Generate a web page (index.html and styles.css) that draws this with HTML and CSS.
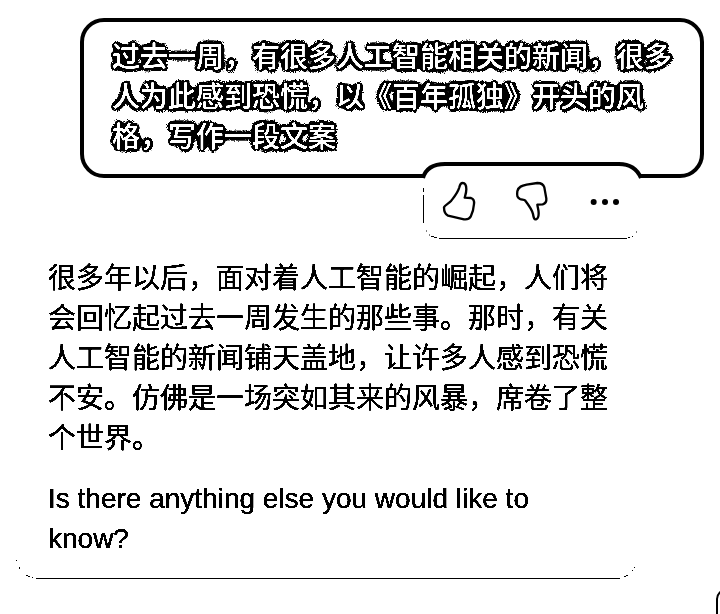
FILE: index.html
```html
<!DOCTYPE html>
<html lang="zh-CN">
<head>
<meta charset="utf-8">
<meta name="viewport" content="width=device-width, initial-scale=1">
<title>Chat</title>
<link rel="stylesheet" href="styles.css">
</head>
<body>
<svg class="defs" aria-hidden="true">
  <filter id="halo" x="-2%" y="-8%" width="104%" height="116%" color-interpolation-filters="sRGB">
    <feGaussianBlur in="SourceAlpha" stdDeviation="2.400" result="soft"/>
    <feTurbulence type="fractalNoise" baseFrequency="0.9" numOctaves="1" seed="4" result="noise"/>
    <feDisplacementMap in="soft" in2="noise" scale="4" xChannelSelector="R" yChannelSelector="G" result="rough"/>
    <feComponentTransfer in="rough" result="ink">
      <feFuncR type="linear" slope="0"/>
      <feFuncG type="linear" slope="0"/>
      <feFuncB type="linear" slope="0"/>
      <feFuncA type="linear" slope="60" intercept="-4"/>
    </feComponentTransfer>
    <feComponentTransfer in="SourceGraphic" result="glyphs">
      <feFuncA type="linear" slope="5" intercept="-1.800"/>
    </feComponentTransfer>
    <feMerge>
      <feMergeNode in="ink"/>
      <feMergeNode in="glyphs"/>
    </feMerge>
  </filter>
  <filter id="crisp" x="0" y="0" width="100%" height="100%" color-interpolation-filters="sRGB">
    <feComponentTransfer>
      <feFuncA type="linear" slope="8" intercept="-1.200"/>
    </feComponentTransfer>
  </filter>
</svg>
<main class="chat">
  <section class="question">
    <p class="question-text">过去一周，有很多人工智能相关的新闻，很多人为此感到恐慌，以《百年孤独》开头的风格，写作一段文案</p>
  </section>
  <article class="answer">
    <div class="toolbar">
      <svg class="toolbar-frame" viewBox="0 0 222 78" aria-hidden="true">
        <path d="M2 16Q6 2 24 2H198Q216 2 220 16V60Q216 76 198 76H24Q6 76 2 60Z" fill="#fff"/>
        <path d="M2 16Q6 2 24 2H198Q214 2 220 16" fill="none" stroke="#000" stroke-width="4"/>
        <path d="M2.500 26V30M2.500 33V61M5 69h1M8 73h1M10 74.500h3M13 75.500h3M18 76.500H206M207 75.500h2M211 74.500h1M215 70h1" fill="none" stroke="#000"/>
      </svg>
      <button class="tool" type="button" aria-label="Like">
        <svg viewBox="96 90 108 126"><path d="M105 172C108 165 118 162 126 153C138 138 147 128 151 112C153 103 155 99 161 99C170 99 172 108 172 118C172 128 169 136 167 143L186 144C195 147 196 155 195 162C194 176 190 190 185 200C180 208 172 209 165 208L117 197C108 193 105 184 105 172Z"/></svg>
      </button>
      <button class="tool" type="button" aria-label="Dislike">
        <svg viewBox="312 90 108 126"><path d="M346 152C356 165 366 178 369 192C371 205 373 209 378 208C385 206 386 198 386 190C386 180 383 173 382 164L398 163C408 160 410 155 409 146L403 112C400 102 393 99 382 99L350 104C336 107 325 110 322 124C320 138 322 142 330 147C336 150 342 148 346 152Z"/></svg>
      </button>
      <button class="tool" type="button" aria-label="More">
        <svg class="dots" viewBox="531 90 108 126"><circle cx="551" cy="156" r="9"/><circle cx="585" cy="156" r="9"/><circle cx="618" cy="156" r="9"/></svg>
      </button>
    </div>
    <div class="answer-text">
      <p>很多年以后，面对着人工智能的崛起，人们将会回忆起过去一周发生的那些事。那时，有关人工智能的新闻铺天盖地，让许多人感到恐慌不安。仿佛是一场突如其来的风暴，席卷了整个世界。</p>
      <p lang="en">Is there anything else you would like to know?</p>
    </div>
    <div class="answer-edge" aria-hidden="true">
      <svg viewBox="0 0 20 20"><path d="M0 1.500h1M3.500 8v2M10 16.500h2M12 17.500h2M16 18.500h1"/></svg>
      <span class="edge-line"></span>
      <svg viewBox="0 0 20 20"><path d="M4 17.500h2M6 16.500h2M12 11.500h1M14 8.500h1"/></svg>
    </div>
  </article>
  <div class="next-question"></div>
</main>
</body>
</html>
```
FILE: styles.css
```css
* {
  box-sizing: border-box;
}

body {
  margin: 0;
  background: #fff;
  color: #000;
  font-family: "Liberation Sans", "Noto Sans CJK SC", sans-serif;
  font-size: 28px;
  line-height: 40px;
}

p {
  margin: 0;
}

.defs {
  position: absolute;
  width: 0;
  height: 0;
}

.chat {
  position: relative;
  min-height: 100vh;
  padding: 18px 16px 0;
  overflow: hidden;
}

.question {
  margin-left: 64px;
  padding: 16px 28px;
  border: 4px solid #000;
  border-radius: 24px;
}

.question-text {
  color: #fff;
  font-weight: 500;
  filter: url(#halo);
}

.answer {
  position: relative;
  margin-right: 64px;
  padding-top: 81px;
}

.toolbar {
  position: absolute;
  top: -16px;
  right: -3px;
  display: flex;
  justify-content: space-between;
  align-items: center;
  width: 222px;
  height: 78px;
  padding: 0 20px;
}

.toolbar-frame {
  position: absolute;
  inset: 0;
  width: 100%;
  height: 100%;
}

.tool {
  position: relative;
  width: 36px;
  height: 42px;
  padding: 0;
  border: 0;
  background: none;
}

.tool svg {
  display: block;
  width: 36px;
  height: 42px;
  fill: none;
  stroke: #000;
  stroke-width: 7;
  stroke-linejoin: round;
}

.tool .dots {
  fill: #000;
  stroke: none;
}

.answer-text {
  display: flex;
  flex-direction: column;
  gap: 20px;
  padding: 0 32px;
  filter: url(#crisp);
}

.answer-edge {
  display: flex;
  align-items: flex-end;
}

.answer-edge svg {
  width: 20px;
  height: 20px;
  fill: none;
  stroke: #000;
}

.edge-line {
  flex: 1;
  border-bottom: 1px solid #000;
}

.next-question {
  position: absolute;
  right: -40px;
  bottom: -40px;
  width: 44px;
  height: 65px;
  border: 2px solid #000;
  border-radius: 10px;
}
```
